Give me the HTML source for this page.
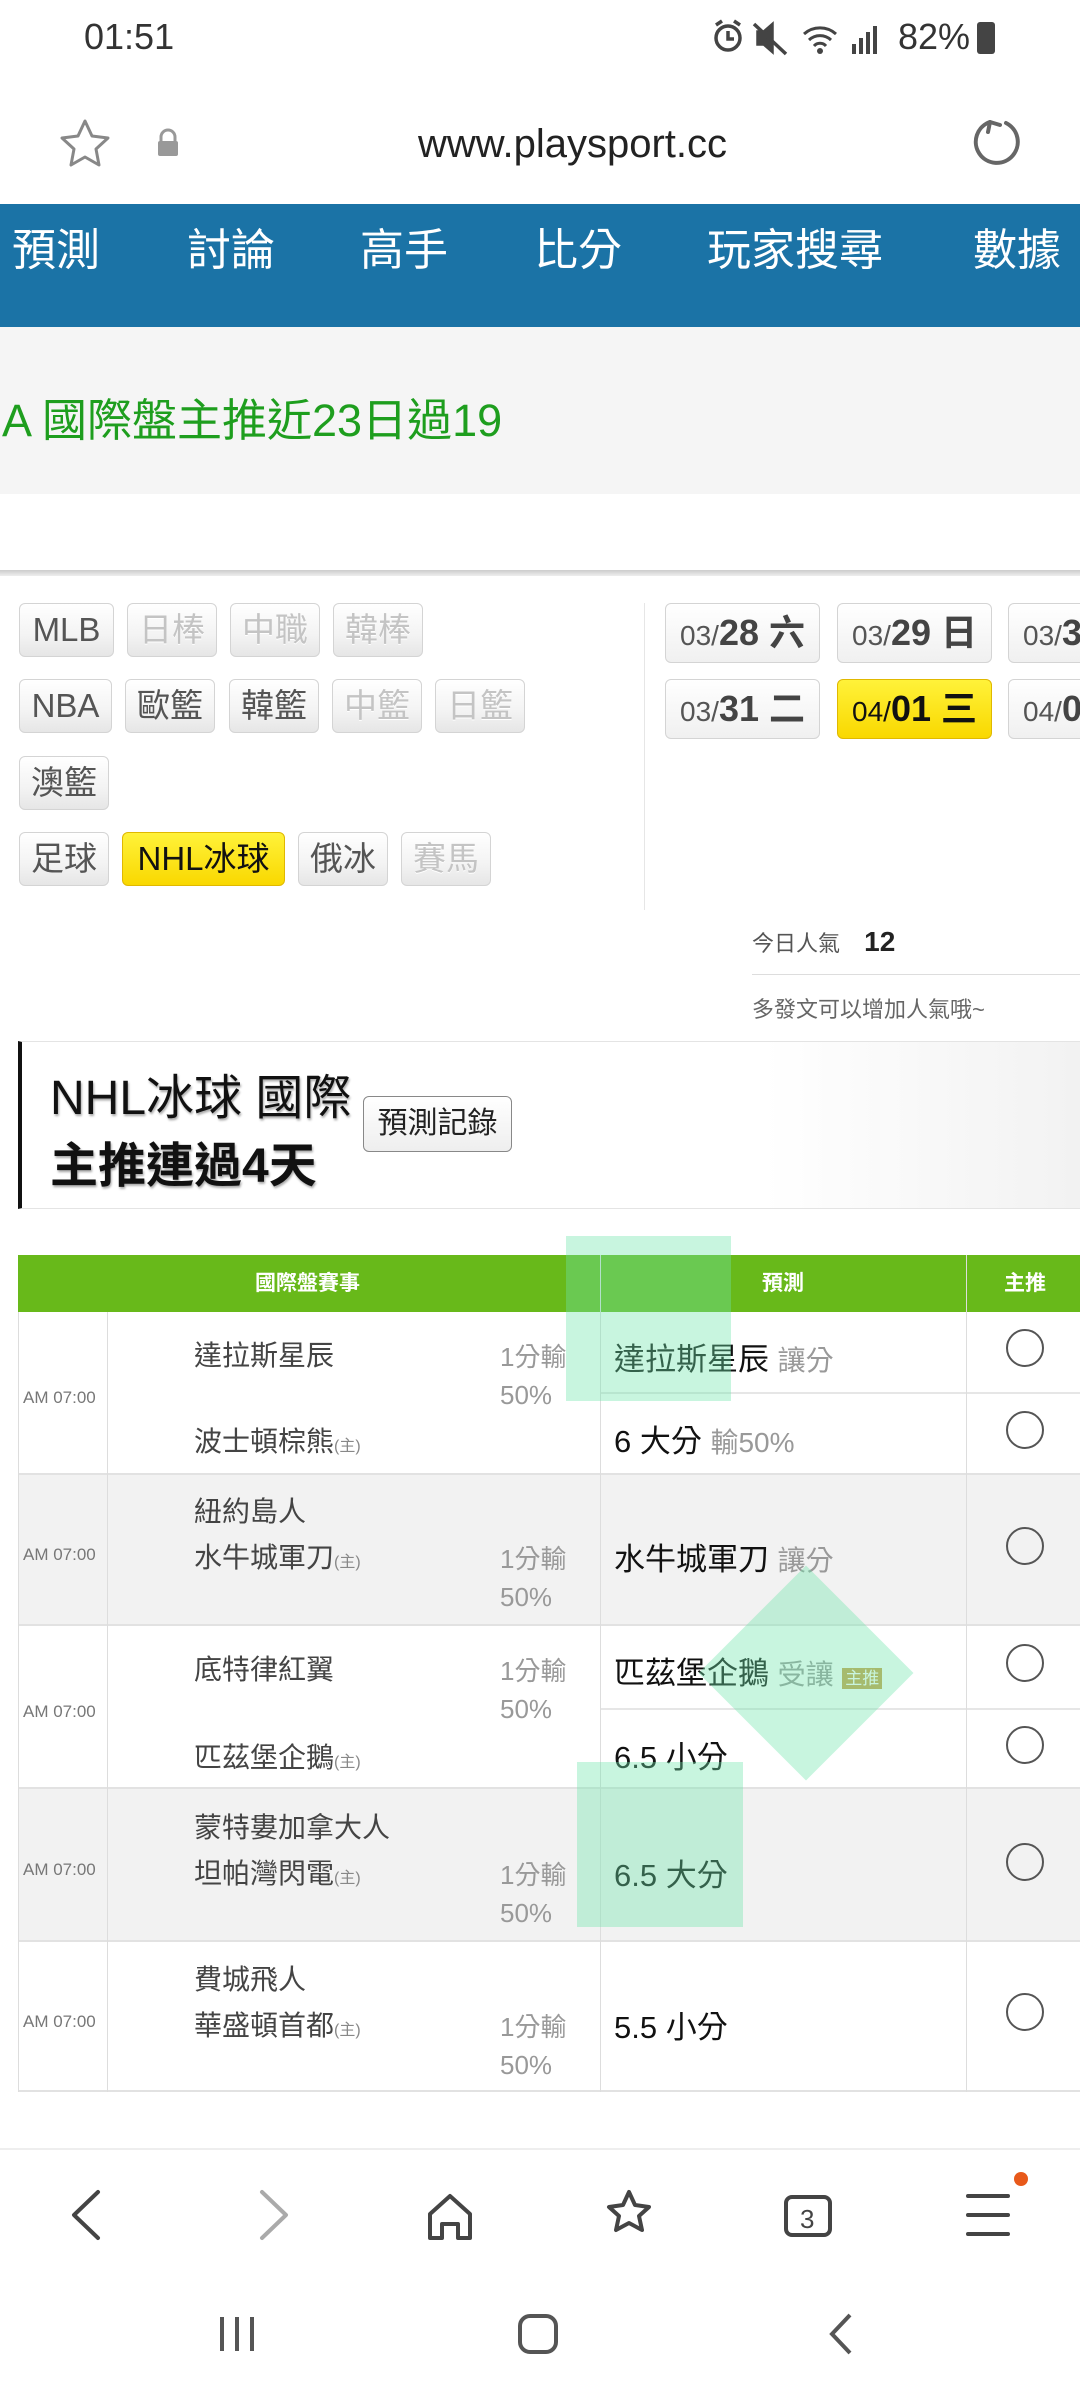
<!DOCTYPE html>
<html><head><meta charset="utf-8">
<style>
*{margin:0;padding:0;box-sizing:border-box}
body{width:1080px;height:2400px;position:relative;background:#fff;font-family:"Liberation Sans","Noto Sans CJK TC",sans-serif;overflow:hidden;color:#222}
.a{position:absolute;white-space:nowrap}
.nav span{position:absolute;font-size:44px;color:#fff}
.btn{position:absolute;height:54px;border:1px solid #d4d4d4;border-radius:6px;background:linear-gradient(#fff,#f3f3f3 60%,#e6e6e6);font-size:33px;color:#555;text-align:center;line-height:52px}
.dis{color:#c4c4c4;text-shadow:0 1px 0 #fff}
.date{position:absolute;height:60px;width:155px;border:1px solid #d4d4d4;border-radius:6px;background:linear-gradient(#fff,#f0f0f0);font-size:28px;color:#555;line-height:58px;padding-left:14px}
.date b{font-size:36px;color:#444}
.btn.yel,.date.yel{background:linear-gradient(#fff23a,#f9d800);border-color:#e0b800;color:#111}
.row{position:absolute;left:18px;width:1062px;border-bottom:2px solid #e2e2e2}
.t{font-size:28px;color:#444}
.o{font-size:26px;color:#999;line-height:38px}
.p{font-size:31px;color:#111}
.p i{font-style:normal;color:#999;font-size:28px}
.c{position:absolute;left:1006px;width:38px;height:38px;border:2px solid #555;border-radius:50%}
.tm{font-size:17px;color:#777;left:23px}
.vl{position:absolute;width:1px;background:#ddd}
.ov{position:absolute;background:rgba(110,230,170,0.38)}
</style></head><body>
<!-- status bar -->
<div class="a" style="left:84px;top:16px;font-size:36px;color:#333">01:51</div>
<svg class="a" style="left:710px;top:18px" width="80" height="40" fill="none" stroke="#444" stroke-width="3.5">
<circle cx="18" cy="20" r="12"/><path d="M18 13v8h6M6 7l6-4M30 7l-6-4"/>
<path d="M48 14h6l8-7v26l-8-7h-6z" fill="#444"/><path d="M44 6l32 30"/>
</svg>
<svg class="a" style="left:800px;top:20px" width="80" height="36"><path d="M4 14a24 24 0 0 1 32 0M9 20a16 16 0 0 1 22 0M14 26a8 8 0 0 1 12 0" stroke="#444" stroke-width="3" fill="none"/><circle cx="20" cy="31" r="3" fill="#444"/><rect x="52" y="24" width="4" height="10" fill="#444"/><rect x="59" y="18" width="4" height="16" fill="#444"/><rect x="66" y="12" width="4" height="22" fill="#444"/><rect x="73" y="6" width="4" height="28" fill="#444"/></svg>
<div class="a" style="left:898px;top:16px;font-size:36px;color:#333">82%</div>
<div class="a" style="left:977px;top:22px;width:18px;height:32px;background:#444;border-radius:3px"></div>
<!-- url bar -->
<svg class="a" style="left:58px;top:118px" width="54" height="52"><path d="M27 3l7 15 16 2-12 11 3 16-14-8-14 8 3-16L4 20l16-2z" fill="none" stroke="#888" stroke-width="3" stroke-linejoin="round"/></svg>
<svg class="a" style="left:155px;top:128px" width="26" height="30"><path d="M6 13V9a7 7 0 0 1 14 0v4" stroke="#999" stroke-width="3" fill="none"/><rect x="3" y="13" width="20" height="15" rx="2" fill="#999"/></svg>
<div class="a" style="left:0;width:1145px;text-align:center;top:122px;font-size:40px;color:#222">www.playsport.cc</div>
<svg class="a" style="left:968px;top:114px" width="58" height="58" fill="none" stroke="#666" stroke-width="4" stroke-linecap="round"><path d="M22 8A21 21 0 1 0 38 9"/><path d="M22 8l-2 10M22 8l10 3"/></svg>
<!-- nav -->
<div class="a nav" style="left:0;top:204px;width:1080px;height:123px;background:#1b73a6">
<span style="left:12px;top:10px">預測</span><span style="left:187px;top:10px">討論</span><span style="left:360px;top:10px">高手</span><span style="left:534px;top:10px">比分</span><span style="left:707px;top:10px">玩家搜尋</span><span style="left:973px;top:10px">數據</span></div>
<div class="a" style="left:0;top:327px;width:1080px;height:167px;background:#f5f5f5"></div>
<div class="a" style="left:2px;top:384px;font-size:45px;color:#1e9e1e">A 國際盤主推近23日過19</div>
<div class="a" style="left:0;top:570px;width:1080px;height:6px;background:linear-gradient(#ccc,#eee)"></div>
<!-- sport buttons -->
<div class="btn" style="left:19px;top:603px;width:95px">MLB</div>
<div class="btn dis" style="left:127px;top:603px;width:90px">日棒</div>
<div class="btn dis" style="left:230px;top:603px;width:90px">中職</div>
<div class="btn dis" style="left:333px;top:603px;width:90px">韓棒</div>
<div class="btn" style="left:19px;top:679px;width:93px">NBA</div>
<div class="btn" style="left:125px;top:679px;width:90px">歐籃</div>
<div class="btn" style="left:229px;top:679px;width:90px">韓籃</div>
<div class="btn dis" style="left:332px;top:679px;width:90px">中籃</div>
<div class="btn dis" style="left:435px;top:679px;width:90px">日籃</div>
<div class="btn" style="left:19px;top:756px;width:90px">澳籃</div>
<div class="btn" style="left:19px;top:832px;width:90px">足球</div>
<div class="btn yel" style="left:122px;top:832px;width:163px">NHL冰球</div>
<div class="btn" style="left:298px;top:832px;width:90px">俄冰</div>
<div class="btn dis" style="left:401px;top:832px;width:90px">賽馬</div>
<div class="vl" style="left:644px;top:603px;height:307px;background:#e6e6e6"></div>
<div class="date" style="left:665px;top:603px">03/<b>28 六</b></div>
<div class="date" style="left:837px;top:603px">03/<b>29 日</b></div>
<div class="date" style="left:1008px;top:603px">03/<b>30</b></div>
<div class="date" style="left:665px;top:679px">03/<b>31 二</b></div>
<div class="date yel" style="left:837px;top:679px;color:#111">04/<b style="color:#111">01 三</b></div>
<div class="date" style="left:1008px;top:679px">04/<b>02</b></div>
<div class="a" style="left:752px;top:926px;font-size:22px;color:#555">今日人氣 <b style="font-size:28px;color:#222;margin-left:18px">12</b></div>
<div class="a" style="left:752px;top:974px;width:328px;height:1px;background:#ddd"></div>
<div class="a" style="left:752px;top:992px;font-size:22px;color:#666">多發文可以增加人氣哦~</div>
<!-- title box -->
<div class="a" style="left:18px;top:1041px;width:1062px;height:168px;border-left:4px solid #111;border-top:1px solid #e4e4e4;border-bottom:1px solid #e4e4e4;background:linear-gradient(90deg,#fff 70%,#f2f2f2)"></div>
<div class="a" style="left:50px;top:1058px;font-size:48px;color:#111;text-shadow:1px 2px 2px #aaa">NHL冰球 國際</div>
<div class="a" style="left:50px;top:1126px;font-size:48px;font-weight:bold;color:#111;text-shadow:1px 2px 2px #aaa">主推連過4天</div>
<div class="a" style="left:363px;top:1096px;width:149px;height:56px;border:1px solid #888;border-radius:6px;background:linear-gradient(#fff,#eee);font-size:30px;line-height:54px;text-align:center;color:#222">預測記錄</div>
<!-- table -->
<div class="a" style="left:18px;top:1255px;width:1062px;height:57px;background:#68b91a;color:#fff;font-weight:bold;font-size:21px;line-height:57px">
<span class="a" style="left:237px">國際盤賽事</span><span class="a" style="left:744px">預測</span><span class="a" style="left:986px">主推</span></div>
<div class="row" style="top:1312px;height:163px;background:#fff"></div>
<div class="row" style="top:1475px;height:151px;background:#f2f2f2"></div>
<div class="row" style="top:1626px;height:163px;background:#fff"></div>
<div class="row" style="top:1789px;height:153px;background:#f2f2f2"></div>
<div class="row" style="top:1942px;height:150px;background:#fff"></div>
<div class="a" style="left:600px;top:1392px;width:480px;height:2px;background:#e6e6e6"></div>
<div class="a" style="left:600px;top:1708px;width:480px;height:2px;background:#e6e6e6"></div>
<div class="vl" style="left:18px;top:1312px;height:780px"></div>
<div class="vl" style="left:107px;top:1312px;height:780px"></div>
<div class="vl" style="left:600px;top:1255px;height:837px"></div>
<div class="vl" style="left:966px;top:1255px;height:837px"></div>
<!-- row1 -->
<div class="a tm" style="top:1388px">AM 07:00</div>
<div class="a t" style="left:194px;top:1334px">達拉斯星辰</div>
<div class="a t" style="left:194px;top:1420px">波士頓棕熊<small style="font-size:16px;color:#888">(主)</small></div>
<div class="a o" style="left:500px;top:1338px">1分輸<br>50%</div>
<div class="a p" style="left:614px;top:1334px">達拉斯星辰 <i>讓分</i></div>
<div class="a p" style="left:614px;top:1416px">6 大分 <i>輸50%</i></div>
<div class="c" style="top:1329px"></div><div class="c" style="top:1411px"></div>
<!-- row2 -->
<div class="a tm" style="top:1545px">AM 07:00</div>
<div class="a t" style="left:194px;top:1490px">紐約島人</div>
<div class="a t" style="left:194px;top:1536px">水牛城軍刀<small style="font-size:16px;color:#888">(主)</small></div>
<div class="a o" style="left:500px;top:1540px">1分輸<br>50%</div>
<div class="a p" style="left:614px;top:1534px">水牛城軍刀 <i>讓分</i></div>
<div class="c" style="top:1527px"></div>
<!-- row3 -->
<div class="a tm" style="top:1702px">AM 07:00</div>
<div class="a t" style="left:194px;top:1648px">底特律紅翼</div>
<div class="a t" style="left:194px;top:1736px">匹茲堡企鵝<small style="font-size:16px;color:#888">(主)</small></div>
<div class="a o" style="left:500px;top:1652px">1分輸<br>50%</div>
<div class="a p" style="left:614px;top:1648px">匹茲堡企鵝 <i>受讓</i> <span style="font-size:17px;background:#c9a24a;color:#fff;padding:1px 3px">主推</span></div>
<div class="a p" style="left:614px;top:1732px">6.5 小分</div>
<div class="c" style="top:1644px"></div><div class="c" style="top:1726px"></div>
<!-- row4 -->
<div class="a tm" style="top:1860px">AM 07:00</div>
<div class="a t" style="left:194px;top:1806px">蒙特婁加拿大人</div>
<div class="a t" style="left:194px;top:1852px">坦帕灣閃電<small style="font-size:16px;color:#888">(主)</small></div>
<div class="a o" style="left:500px;top:1856px">1分輸<br>50%</div>
<div class="a p" style="left:614px;top:1850px">6.5 大分</div>
<div class="c" style="top:1843px"></div>
<!-- row5 -->
<div class="a tm" style="top:2012px">AM 07:00</div>
<div class="a t" style="left:194px;top:1958px">費城飛人</div>
<div class="a t" style="left:194px;top:2004px">華盛頓首都<small style="font-size:16px;color:#888">(主)</small></div>
<div class="a o" style="left:500px;top:2008px">1分輸<br>50%</div>
<div class="a p" style="left:614px;top:2002px">5.5 小分</div>
<div class="c" style="top:1993px"></div>
<!-- overlays -->
<div class="ov" style="left:566px;top:1236px;width:165px;height:165px"></div>
<div class="ov" style="left:730px;top:1597px;width:152px;height:152px;transform:rotate(45deg)"></div>
<div class="ov" style="left:577px;top:1762px;width:166px;height:165px"></div>
<!-- bottom bar -->
<div class="a" style="left:0;top:2148px;width:1080px;height:2px;background:#eee"></div>
<svg class="a" style="left:0;top:2180px" width="1080" height="70" fill="none" stroke="#444" stroke-width="4" stroke-linejoin="round" stroke-linecap="round">
<path d="M98 12L74 35l24 23"/>
<path d="M262 12l24 23-24 23" stroke="#aaa"/>
<path d="M430 34l20-18 20 18v24h-12V44h-16v14h-12z"/>
<path d="M629 12l6 13 14 2-10 9 3 14-13-7-13 7 3-14-10-9 14-2z"/>
<rect x="786" y="17" width="44" height="38" rx="6"/><text x="800" y="48" font-size="26" fill="#444" stroke="none" font-family="Liberation Sans">3</text>
<path d="M968 16h40M968 35h40M968 54h40"/>
</svg>
<div class="a" style="left:1014px;top:2172px;width:14px;height:14px;border-radius:50%;background:#e8591a"></div>
<svg class="a" style="left:0;top:2305px" width="1080" height="60" fill="none" stroke="#555" stroke-width="4">
<path d="M222 12v34M237 12v34M252 12v34"/>
<rect x="520" y="11" width="36" height="36" rx="10"/>
<path d="M850 10l-18 19 18 19"/>
</svg>
</body></html>
